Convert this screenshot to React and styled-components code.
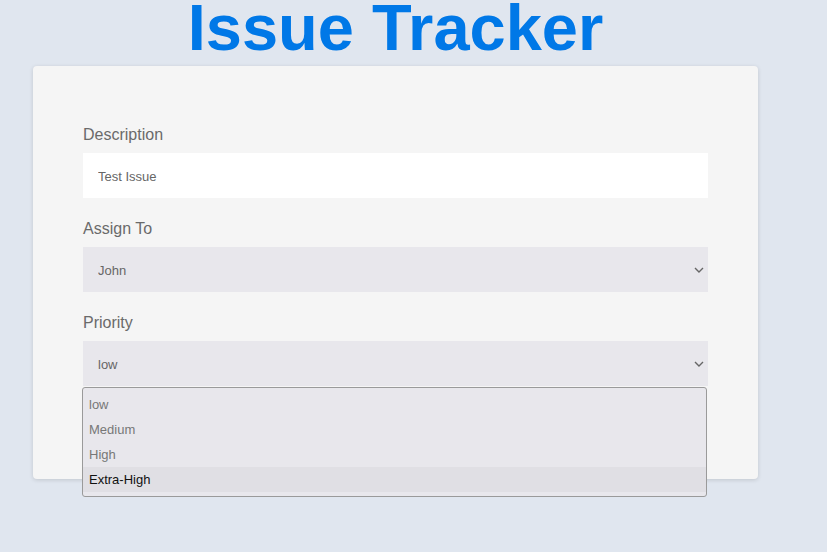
import styled, { createGlobalStyle } from "styled-components";

const GlobalStyle = createGlobalStyle`
  html, body {
    margin: 0;
    padding: 0;
    background: #e0e6ef;
    font-family: "Liberation Sans", Arial, sans-serif;
  }
`;

const priorities = ["low", "Medium", "High", "Extra-High"];

const Chevron = () => (
  <ChevronIcon width="10" height="6" viewBox="0 0 10 6">
    <path d="M1 1l4 4 4-4" fill="none" stroke="#666" strokeWidth="1.4" />
  </ChevronIcon>
);

const App = () => {
  return (
    <>
      <GlobalStyle />
      <Page>
        <Title>Issue Tracker</Title>
        <Card>
          <FormGroup>
            <Label htmlFor="description">Description</Label>
            <Input id="description" type="text" defaultValue="Test Issue" />
          </FormGroup>

          <FormGroup>
            <Label htmlFor="assign">Assign To</Label>
            <SelectWrap>
              <Select id="assign" defaultValue="John">
                <option>John</option>
              </Select>
              <Chevron />
            </SelectWrap>
          </FormGroup>

          <FormGroup>
            <Label htmlFor="priority">Priority</Label>
            <SelectWrap>
              <Select id="priority" defaultValue="low">
                {priorities.map(p => (
                  <option key={p}>{p}</option>
                ))}
              </Select>
              <Chevron />
              <Menu>
                {priorities.map(p => (
                  <MenuItem key={p} $active={p === "Extra-High"}>
                    {p}
                  </MenuItem>
                ))}
              </Menu>
            </SelectWrap>
          </FormGroup>
        </Card>
      </Page>
    </>
  );
};

const Page = styled.div`
  width: 725px;
  min-height: 552px;
  margin-left: 33px;
`;

const Title = styled.h1`
  margin: 0;
  padding-top: 3px;
  font-size: 65px;
  line-height: 50px;
  font-weight: 700;
  color: #0078e7;
  text-align: center;
`;

const Card = styled.div`
  margin-top: 13px;
  height: 413px;
  box-sizing: border-box;
  padding: 59px 50px 0;
  background: #f5f5f5;
  border-radius: 4px;
  box-shadow: 0 1px 4px rgba(0, 0, 0, 0.14);
`;

const FormGroup = styled.div`
  display: flex;
  flex-direction: column;
  gap: 8px;
  margin-bottom: 21px;
`;

const Label = styled.label`
  font-size: 16px;
  line-height: 20px;
  color: #6a6a6a;
`;

const Input = styled.input`
  height: 45px;
  box-sizing: border-box;
  padding: 2px 15px 0;
  border: none;
  outline: none;
  background: #fff;
  font-family: inherit;
  font-size: 13px;
  color: #666;
`;

const SelectWrap = styled.div`
  position: relative;
`;

const Select = styled.select`
  width: 100%;
  height: 45px;
  box-sizing: border-box;
  padding: 2px 15px 0;
  border: none;
  border-radius: 0;
  outline: none;
  appearance: none;
  background: #e8e7ec;
  font-family: inherit;
  font-size: 13px;
  color: #666;
`;

const ChevronIcon = styled.svg`
  position: absolute;
  right: 4px;
  top: 20px;
  pointer-events: none;
`;

const Menu = styled.div`
  position: absolute;
  top: 46px;
  left: -1px;
  width: 625px;
  box-sizing: border-box;
  padding: 4px 0;
  border: 1px solid #9a9a9a;
  border-radius: 3px;
  background: #e8e7ec;
  z-index: 2;
`;

const MenuItem = styled.div`
  height: 25px;
  line-height: 25px;
  padding: 0 6px;
  font-size: 13px;
  color: ${props => (props.$active ? "#111" : "#777")};
  background: ${props => (props.$active ? "#e0dfe4" : "transparent")};
`;

export default App;
